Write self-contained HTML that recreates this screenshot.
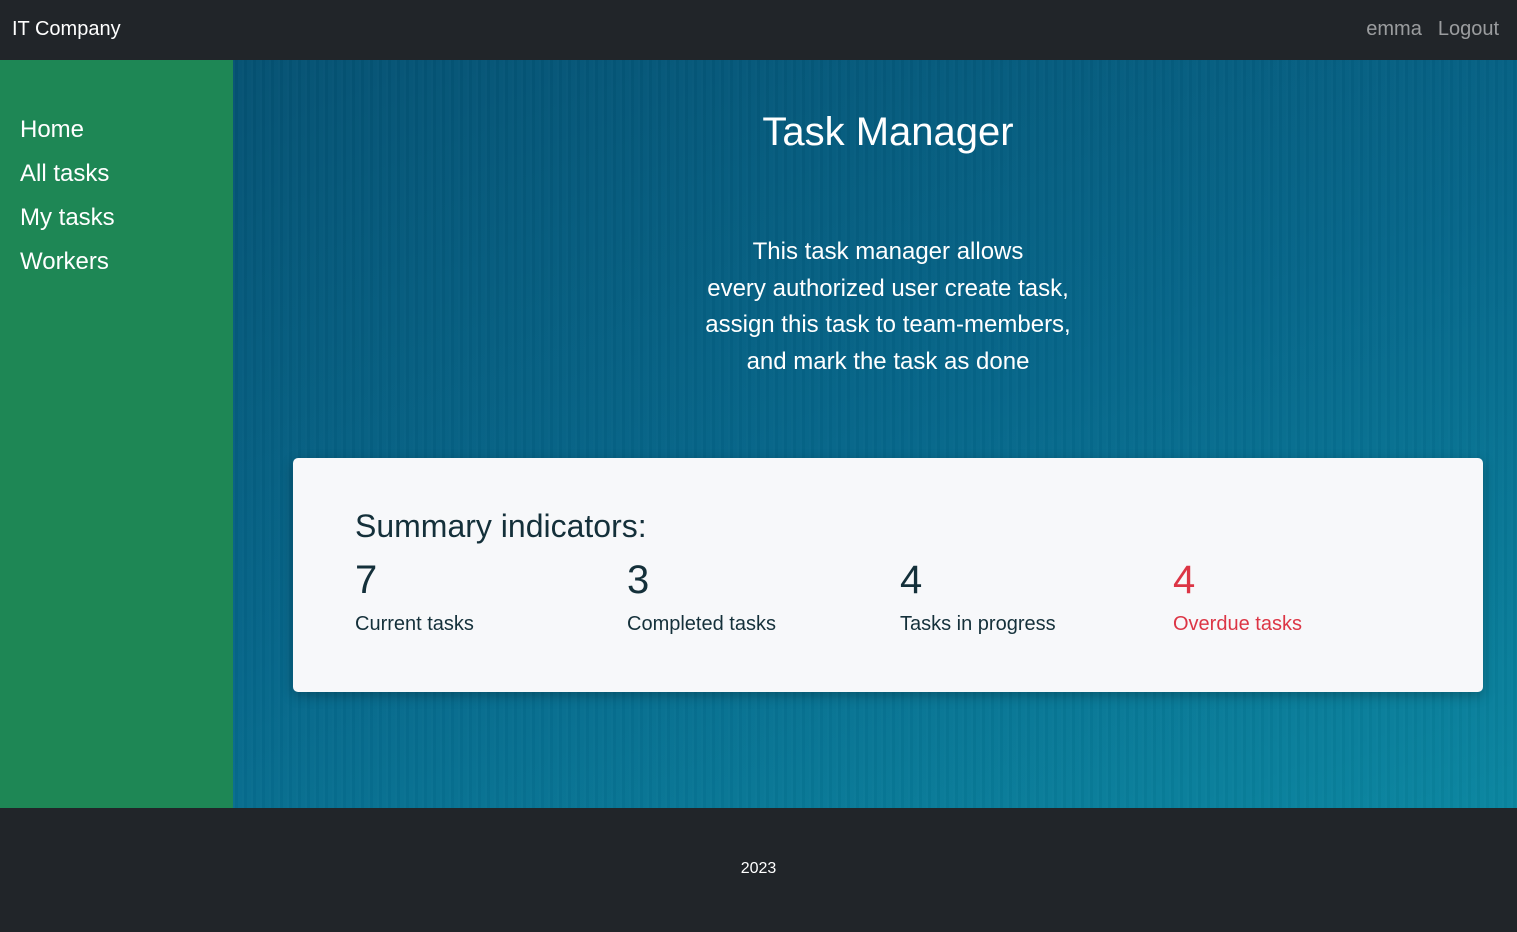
<!DOCTYPE html>
<html><head><meta charset="utf-8"><style>
*{margin:0;padding:0;box-sizing:border-box}
body{width:1517px;height:932px;font-family:"Liberation Sans",Arial,sans-serif;background:#212529;overflow:hidden}
.top{height:60px;background:#212529;position:relative;color:#fff}
.brand{position:absolute;left:12px;top:18px;font-size:20px}
.right{position:absolute;right:18px;top:18px;font-size:20px;color:rgba(255,255,255,.55)}
.right span{margin-left:16px}
.side{position:absolute;left:0;top:60px;width:233px;height:748px;background:#1e8755}
.side a{display:block;color:#fff;font-size:24px;position:absolute;left:20px}
.main{position:absolute;left:233px;top:60px;width:1284px;height:748px;
background:linear-gradient(160deg,#055273 0%,#06668a 50%,#0a86a0 100%)}
.main:before{content:"";position:absolute;inset:0;background:repeating-linear-gradient(90deg,rgba(255,255,255,.02) 0 2px,rgba(0,0,0,.025) 2px 5px,rgba(255,255,255,.01) 5px 9px)}
h1{position:absolute;left:0;width:1310px;text-align:center;top:50px;font-weight:normal;font-size:40px;color:#fff}
.desc{position:absolute;left:0;width:1310px;text-align:center;top:174px;color:#fff;font-size:24px;line-height:36.7px}
.card{position:absolute;left:60px;top:398px;width:1190px;height:234px;background:#f7f8fa;border-radius:5px;box-shadow:0 4px 12px rgba(0,0,0,.25);color:#14303a}
.card h2{position:absolute;left:62px;top:50px;font-weight:normal;font-size:32px}
.ind{position:absolute;top:100px}
.ind .n{font-size:40px}
.ind .l{font-size:20px;margin-top:10px}
.red{color:#dc3545}
.foot{position:absolute;top:860px;left:0;width:1517px;text-align:center;color:#fff;font-size:16px}
</style></head><body>
<div class="top"><div class="brand">IT Company</div><div class="right"><span>emma</span><span>Logout</span></div></div>
<div class="side">
<a style="top:56px">Home</a><a style="top:100px">All tasks</a><a style="top:144px">My tasks</a><a style="top:188px">Workers</a>
</div>
<div class="main">
<h1>Task Manager</h1>
<div class="desc">This task manager allows<br>every authorized user create task,<br>assign this task to team-members,<br>and mark the task as done</div>
<div class="card">
<h2>Summary indicators:</h2>
<div class="ind" style="left:62px"><div class="n">7</div><div class="l">Current tasks</div></div>
<div class="ind" style="left:334px"><div class="n">3</div><div class="l">Completed tasks</div></div>
<div class="ind" style="left:607px"><div class="n">4</div><div class="l">Tasks in progress</div></div>
<div class="ind red" style="left:880px"><div class="n">4</div><div class="l">Overdue tasks</div></div>
</div>
</div>
<div class="foot">2023</div>
</body></html>
